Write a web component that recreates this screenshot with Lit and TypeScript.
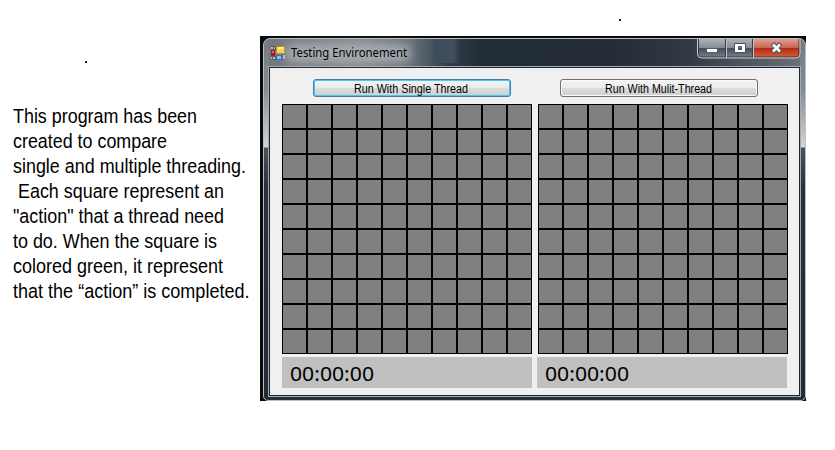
import { LitElement, html, css, svg } from "lit";
import { customElement, property } from "lit/decorators.js";

const fitted = (text: string, x: number, y: number, width: number) =>
  svg`<text x=${x} y=${y} textLength=${width} lengthAdjust="spacingAndGlyphs">${text}</text>`;

@customElement("thread-panel")
class ThreadPanel extends LitElement {
  @property() label = "";
  @property() width = "";
  @property({ type: Boolean, reflect: true }) focused = false;
  @property({ type: Boolean, reflect: true }) second = false;

  static styles = css`
    :host { display: block; width: 250px; }
    .button {
      box-sizing: border-box; display: block; width: 198px; height: 18px;
      margin: 0 0 7px 31px; padding: 0; border: 1px solid #707070; border-radius: 3px;
      background: linear-gradient(#f3f3f3, #ebebeb 50%, #dcdcdc 51%, #cfcfcf);
      box-shadow: inset 0 0 0 1px #fbfbfb;
    }
    :host([focused]) .button { border-color: #3c7fb1; box-shadow: inset 0 0 0 1px #48caf0; }
    :host([second]) .button { margin-left: 23px; }
    :host([second]) .grid { margin-left: 1px; }
    svg { display: block; font-family: "Liberation Sans", sans-serif; font-size: 12px; fill: #000; }
    .grid { display: grid; grid-template-columns: repeat(10, 25px); grid-auto-rows: 25px; width: 250px; }
    .cell { box-sizing: border-box; border: 1px solid #000; background: #808080; }
    .time { height: 31px; margin-top: 3px; background: #c0c0c0; }
    .time svg { font-family: "Noto Sans", sans-serif; font-size: 20.4px; }
  `;

  render() {
    return html`
      <button class="button">
        <svg width="196" height="16">${fitted(this.label, this.second ? 44 : 40, 13, Number(this.width))}</svg>
      </button>
      <div class="grid">${Array.from({ length: 100 }, () => html`<div class="cell"></div>`)}</div>
      <div class="time"><svg width="250" height="31">${fitted("00:00:00", 8, 24, 84)}</svg></div>
    `;
  }
}

@customElement("app-root")
class AppRoot extends LitElement {
  static styles = css`
    :host { display: flex; position: relative; width: 835px; height: 450px; background: #fff; overflow: hidden; }
    .note { width: 260px; flex: none; overflow: visible; font-family: "Liberation Sans", sans-serif; font-size: 20.5px; }
    .dot { position: absolute; width: 2px; height: 2px; background: #222; }
    .one { left: 85px; top: 61px; }
    .two { left: 619px; top: 19px; }
    .backdrop { box-sizing: border-box; width: 546px; height: 365px; margin-top: 36px; padding: 2px 0 0 3px; background: #090c0c; }
    .window {
      box-sizing: border-box; width: 543px; height: 363px; padding: 0 6px 5px; border: 1px solid #b9bec3; border-radius: 7px 7px 5px 5px;
      background:
        linear-gradient(#727a82 0, #858b90 50px, #d3d5d7 108px, #4a535d 109px, #27303c 150px, #222c39 100%) left top / 5px 100% no-repeat,
        linear-gradient(#727a82 0, #858b90 50px, #d3d5d7 108px, #4a535d 109px, #27303c 150px, #222c39 100%) right top / 5px 100% no-repeat,
        linear-gradient(90deg, #3f4e5c00, #3f4e5c 20%, #3f4e5c 80%, #3f4e5c00) 166px 0 / 30px 24px no-repeat,
        linear-gradient(90deg, #70777e 0, #858b90 18%, #68717a 27%, #333e4a 34%, #222c37 40%, #242d38 65%, #303943 78%, #6b7278 100%) top / 100% 31px no-repeat,
        #27303c;
    }
    .bar { display: flex; height: 29px; }
    .icon { display: block; flex: none; margin: 7px 0 0 1px; }
    .title { flex: 1; overflow: visible; font-family: "Noto Sans", sans-serif; font-size: 12.5px; }
    .controls { flex: none; display: block; margin-right: -2px; }
    .client { box-sizing: border-box; width: 529px; height: 327px; display: flex; gap: 5px; padding: 11px 12px; background: #f0f0f0; box-shadow: 0 0 0 1px #1d232b, 0 0 0 2px #a6abb0; }
  `;

  render() {
    const lines: [string, number, number][] = [
      ["This program has been", 13, 184], ["created to compare", 13, 154],
      ["single and multiple threading.", 13, 233], ["Each square represent an", 18, 206],
      ['"action" that a thread need', 13, 211], ["to do. When the square is", 13, 204],
      ["colored green, it represent", 13, 210], ["that the “action” is completed.", 13, 236.5],
    ];
    return html`
      <svg class="note" width="260" height="450">${lines.map(([t, x, w], i) => fitted(t, x, 123 + i * 25, w))}</svg>
      <i class="dot one"></i><i class="dot two"></i>
      <div class="backdrop"><div class="window">
        <div class="bar">
          <svg class="icon" width="14" height="14" viewBox="0 0 14 14">
            <path fill="#5c6064" d="M0 0h5v4H0zM0 10h5v4H0zM11 8h3v6h-3z"/>
            <path fill="#b9bcbf" d="M0 1h2v2H0zM3 1h1v2H3zM0 11h1v2H0zM2 11h2v2H2zM12 9h2v4h-2z"/>
            <path fill="#a31d1a" d="M0 4h4v6H0z"/><path fill="#e0706a" d="M1 5h2v2H1z"/>
            <path fill="#c98714" d="M5 0h9v8H5z"/><path fill="#ffd84c" d="M6 1h7v6H6z"/><path fill="#fff0a6" d="M7 1h5v2H7z"/>
            <path fill="#336bc5" d="M5 9h6v5H5z"/><path fill="#8cb8f5" d="M6 10h4v3H6z"/>
          </svg>
          <svg class="title" height="29">
            <defs><filter id="g" x="-20%" y="-80%" width="140%" height="260%"><feGaussianBlur stdDeviation="5"/></filter></defs>
            <rect x="0" y="5" width="126" height="18" rx="8" fill="#b4b8bc" opacity=".75" filter="url(#g)"/>
            ${fitted("Testing Environement", 6, 18, 116)}
          </svg>
          <svg class="controls" width="104" height="20" viewBox="0 0 104 20">
            <defs>
              <linearGradient id="n" x2="0" y2="1"><stop stop-color="#aeb2b7"/><stop offset=".46" stop-color="#858b92"/><stop offset=".5" stop-color="#454e59"/><stop offset="1" stop-color="#7b838b"/></linearGradient>
              <linearGradient id="r" x2="0" y2="1"><stop stop-color="#dfa092"/><stop offset=".46" stop-color="#c96552"/><stop offset=".5" stop-color="#b22c16"/><stop offset="1" stop-color="#d4633f"/></linearGradient>
            </defs>
            <path d="M.5 0V15q0 4 4 4H99q4 0 4-4V0z" fill="url(#n)"/>
            <path d="M56 0H103V15q0 4-4 4H56z" fill="url(#r)"/>
            <path d="M1.500 0V15q0 3 3 3H99q3 0 3-3V0M28.500 0v18M55.500 0v18" fill="none" stroke="#343b45"/>
            <path d="M.5 0V15q0 4 4 4H99q4 0 4-4V0M29.500 0v19M56.500 0v19" fill="none" stroke="#c4c7ca"/>
            <rect x="9.500" y="9.500" width="11" height="4" fill="#fff" stroke="#555b65"/>
            <path d="M37.500 4.500h11v9h-11zM41.500 7.500h3v3h-3z" fill="#fff" fill-rule="evenodd" stroke="#4a505d"/>
            <path d="M75.500 4.500l8 9M83.500 4.500l-8 9" stroke="#515563" stroke-width="4.500"/>
            <path d="M76 5.500l7 7M83 5.500l-7 7" stroke="#fff" stroke-width="2.600"/>
          </svg>
        </div>
        <div class="client">
          <thread-panel label="Run With Single Thread" width="114" focused></thread-panel>
          <thread-panel label="Run With Mulit-Thread" width="107" second></thread-panel>
        </div>
      </div></div>
    `;
  }
}
